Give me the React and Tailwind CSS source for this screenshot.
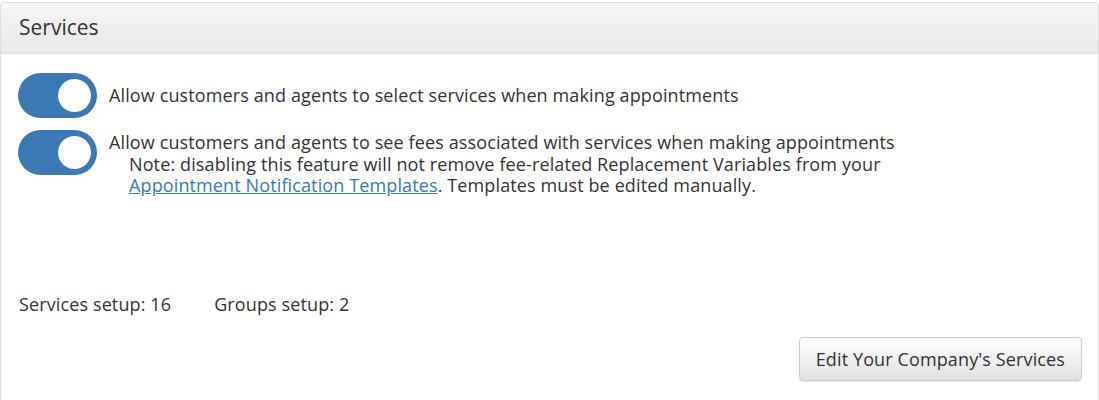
export default function App() {
  const Toggle = () => (
    <div className="w-[79px] h-[45px] rounded-full bg-[#3a79b6] flex items-center justify-end pr-[6px] shrink-0">
      <div className="w-[33px] h-[33px] rounded-full bg-white" />
    </div>
  );
  return (
    <div className="w-[1099px] h-[400px] bg-white overflow-hidden text-[#333]" style={{ fontFamily: '"Open Sans", sans-serif' }}>
      <div className="mt-[2px] border border-[#dddddd] rounded-t-[3px] h-[420px]">
        <div className="h-[51px] px-[18px] flex items-center bg-gradient-to-b from-[#f5f5f5] to-[#e8e8e8] border-b border-[#dddddd] text-[21px]">
          Services
        </div>
        <div className="px-[17px] pt-[19px] tracking-[0.12px]">
          <div className="flex items-center gap-[12px]">
            <Toggle />
            <div className="text-[18px] leading-[21.5px]">Allow customers and agents to select services when making appointments</div>
          </div>
          <div className="flex items-start gap-[12px] mt-[12px]">
            <Toggle />
            <div className="text-[18px] leading-[21.5px] pt-[2px]">
              <div>Allow customers and agents to see fees associated with services when making appointments</div>
              <div className="pl-[20px]">
                Note: disabling this feature will not remove fee-related Replacement Variables from your
                <br />
                <a href="#" className="text-[#337ab7] underline">Appointment Notification Templates</a>. Templates must be edited manually.
              </div>
            </div>
          </div>
          <div className="mt-[97px] flex gap-[43px] text-[18px] leading-[21.5px] pl-[1px]">
            <span>Services setup: 16</span>
            <span>Groups setup: 2</span>
          </div>
          <div className="flex justify-end mt-[22px]">
            <button className="h-[44px] px-[16px] mr-[-1px] rounded-[4px] border border-[#cccccc] bg-gradient-to-b from-white to-[#e0e0e0] shadow-[0_1px_1px_rgba(0,0,0,0.08)] text-[18px] text-[#333]">
              Edit Your Company's Services
            </button>
          </div>
        </div>
      </div>
    </div>
  );
}
